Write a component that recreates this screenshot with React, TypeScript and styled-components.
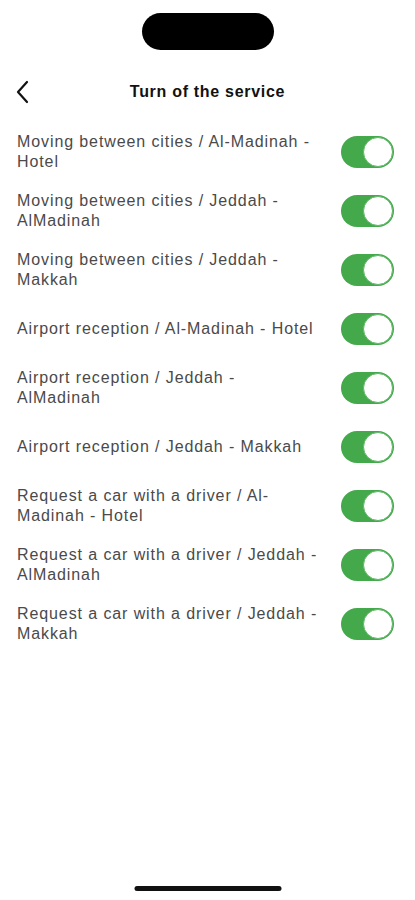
import styled, { createGlobalStyle } from 'styled-components';

const GlobalStyle = createGlobalStyle`
  html, body {
    margin: 0;
    padding: 0;
    background: #ffffff;
  }
  body {
    font-family: 'Liberation Sans', Arial, sans-serif;
  }
`;

const Screen = styled.div`
  width: 415px;
  height: 900px;
  background: #fff;
  display: flex;
  flex-direction: column;
  position: relative;
  overflow: hidden;
`;

const StatusBar = styled.div`
  height: 62px;
  display: flex;
  justify-content: center;
  padding-top: 13px;
  box-sizing: border-box;
`;

const Island = styled.div`
  width: 132px;
  height: 37px;
  border-radius: 19px;
  background: #000;
`;

const Header = styled.div`
  height: 60px;
  display: grid;
  grid-template-columns: 60px 1fr 60px;
  align-items: center;
`;

const BackButton = styled.button`
  border: 0;
  background: none;
  padding: 0 0 0 16px;
  display: flex;
  align-items: center;
  height: 30px;
  cursor: pointer;
`;

const Title = styled.h1`
  margin: 0;
  text-align: center;
  font-size: 16px;
  font-weight: 700;
  color: #111;
  letter-spacing: 0.7px;
`;

const List = styled.div`
  display: flex;
  flex-direction: column;
  padding: 0 21px 0 17px;
`;

const Row = styled.div`
  height: 59px;
  display: flex;
  align-items: center;
  justify-content: space-between;
  gap: 12px;
`;

const Label = styled.span`
  max-width: 302px;
  font-size: 16px;
  line-height: 20px;
  color: #4a4a4a;
  letter-spacing: 0.9px;
`;

const Switch = styled.div<{ on: boolean }>`
  flex: none;
  width: 53px;
  height: 32px;
  border-radius: 16px;
  background: ${({ on }) => (on ? '#43a94b' : '#e5e5ea')};
  position: relative;
`;

const Knob = styled.div<{ on: boolean }>`
  position: absolute;
  top: 1px;
  left: ${({ on }) => (on ? '22px' : '1px')};
  width: 28px;
  height: 28px;
  border-radius: 50%;
  background: #fff;
  border: 1px solid #5fb765;
`;

const HomeIndicator = styled.div`
  position: absolute;
  bottom: 9px;
  left: 50%;
  transform: translateX(-50%);
  width: 147px;
  height: 5px;
  border-radius: 3px;
  background: #111;
`;

const services = [
  'Moving between cities / Al-Madinah - Hotel',
  'Moving between cities / Jeddah - AlMadinah',
  'Moving between cities / Jeddah - Makkah',
  'Airport reception / Al-Madinah - Hotel',
  'Airport reception / Jeddah - AlMadinah',
  'Airport reception / Jeddah - Makkah',
  'Request a car with a driver / Al-Madinah - Hotel',
  'Request a car with a driver / Jeddah - AlMadinah',
  'Request a car with a driver / Jeddah - Makkah',
];

export default function App() {
  return (
    <>
      <GlobalStyle />
      <Screen>
        <StatusBar>
          <Island />
        </StatusBar>
        <Header>
          <BackButton aria-label="Back">
            <svg width="14" height="24" viewBox="0 0 14 24" fill="none">
              <path d="M11 2 L2 12 L11 22" stroke="#111" strokeWidth="2.2" strokeLinecap="round" strokeLinejoin="round" />
            </svg>
          </BackButton>
          <Title>Turn of the service</Title>
          <div />
        </Header>
        <List>
          {services.map((s, i) => (
            <Row key={i}>
              <Label>{s}</Label>
              <Switch on>
                <Knob on />
              </Switch>
            </Row>
          ))}
        </List>
        <HomeIndicator />
      </Screen>
    </>
  );
}
